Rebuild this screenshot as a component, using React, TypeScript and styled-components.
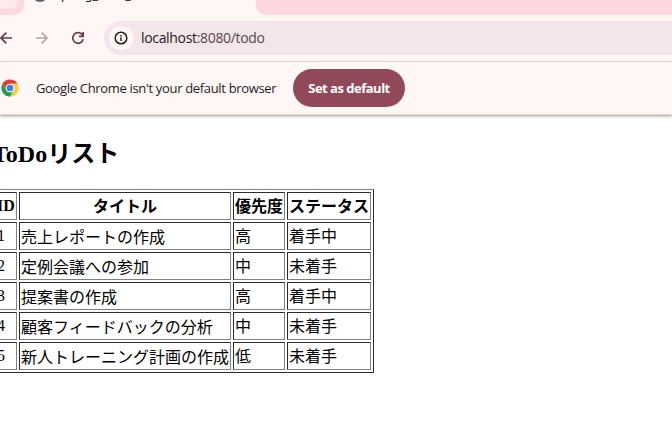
import React from "react";
import styled, { createGlobalStyle } from "styled-components";

const Global = createGlobalStyle`
  * { box-sizing: border-box; }
  html, body { margin: 0; background: #fff; }
  body { overflow: hidden; }
`;

const Window = styled.div`
  width: 672px;
  height: 447px;
  overflow: hidden;
  background: #fff;
`;

const TabStrip = styled.div`
  height: 15px;
  display: flex;
  background: #fff7f5;
  overflow: hidden;
`;

const StripLeft = styled.div`
  width: 24px;
  height: 15px;
  background: #ffd7df;
  border-bottom-right-radius: 10px;
`;

const InactiveTab = styled.div`
  width: 18px;
  height: 9px;
  background: #ffe9ec;
  border-bottom-right-radius: 8px;
`;

const ActiveTab = styled.div`
  width: 232px;
  height: 15px;
  display: flex;
  overflow: hidden;
`;

const TabIcon = styled.svg`
  flex: none;
  margin: -14px 0 0 8px;
`;

const TabTitle = styled.span`
  margin: -14px 0 0 7px;
  font: 12.5px/18px "Noto Sans", sans-serif;
  color: #241b1d;
  white-space: pre;
`;

const StripRight = styled.div`
  flex: 1;
  height: 15px;
  background: #ffd7df;
  border-bottom-left-radius: 10px;
`;

const Toolbar = styled.div`
  height: 47px;
  display: flex;
  align-items: flex-start;
  padding-top: 6px;
  background: #fff7f5;
  border-bottom: 1px solid #efdfe2;
`;

const NavIcon = styled.svg<{ $gap: number }>`
  flex: none;
  margin: 9px ${(p) => p.$gap}px 0 0;
`;

const AddressBar = styled.div`
  flex: 1;
  height: 34px;
  display: flex;
  align-items: center;
  padding-left: 5px;
  background: #f2e6ea;
  border-radius: 17px 0 0 17px;
`;

const SiteInfo = styled.div`
  width: 24px;
  height: 24px;
  display: grid;
  place-items: center;
  border-radius: 50%;
  background: #fff7f5;
`;

const Url = styled.span`
  margin-left: 8px;
  font: 14px/20px "Open Sans", sans-serif;
  letter-spacing: -0.33px;
  color: #241b1d;
  span { color: #5b474c; }
`;

const InfoBar = styled.div`
  height: 53px;
  display: flex;
  align-items: center;
  background: #fff7f5;
  border-bottom: 1px solid #e6d3d7;
  box-shadow: 0 1px 3px rgba(0, 0, 0, 0.4);
`;

const ChromeLogo = styled.svg`
  flex: none;
  margin-left: 1px;
`;

const Message = styled.span`
  width: 257px;
  padding-left: 17px;
  font: 13px/18px "Open Sans", sans-serif;
  letter-spacing: -0.33px;
  color: #241b1d;
  white-space: nowrap;
`;

const DefaultButton = styled.button`
  width: 112px;
  height: 38px;
  margin-left: 17px;
  padding: 0;
  border: 0;
  border-radius: 19px;
  background: #914859;
  color: #fff;
  font: 700 13px/18px "Open Sans", sans-serif;
  letter-spacing: -0.5px;
  white-space: nowrap;
`;

const Page = styled.main`
  margin-left: -8px;
  padding-top: 21px;
  font: 16px/24px "Liberation Serif", "Noto Sans CJK JP", serif;
  color: #000;
`;

const Title = styled.h2`
  margin: 0 0 17px;
  height: 36px;
  font-size: 24px;
  line-height: 36px;
`;

const Table = styled.table`
  width: 382px;
  table-layout: fixed;
  border-collapse: separate;
  border-spacing: 2px;
  border: 1px solid;
  border-color: #808080 #2c2c2c #2c2c2c #808080;
`;

const Col = styled.col<{ $width: number }>`
  width: ${(p) => p.$width}px;
`;

const HeadCell = styled.th`
  height: 28px;
  padding: 2px 1px 0;
  border: 1px solid;
  border-color: #2c2c2c #808080 #808080 #2c2c2c;
  white-space: nowrap;
  line-height: 24px;
  &:first-child { padding: 1px; }
`;

const Cell = styled.td`
  height: 28px;
  padding: 2px 1px 0;
  border: 1px solid;
  border-color: #2c2c2c #808080 #808080 #2c2c2c;
  white-space: nowrap;
  line-height: 24px;
  &:first-child { padding: 1px; }
  &:nth-child(2) { padding: 4px 1px 0; line-height: 22px; }
`;

const headers = ["ID", "タイトル", "優先度", "ステータス"];
const widths = [22, 212, 52, 84];
const todos = [
  ["1", "売上レポートの作成", "高", "着手中"],
  ["2", "定例会議への参加", "中", "未着手"],
  ["3", "提案書の作成", "高", "着手中"],
  ["4", "顧客フィードバックの分析", "中", "未着手"],
  ["5", "新人トレーニング計画の作成", "低", "未着手"],
];

export default function App() {
  return (
    <Window>
      <Global />
      <TabStrip>
        <StripLeft><InactiveTab /></StripLeft>
        <ActiveTab>
          <TabIcon width="16" height="16"><circle cx="8" cy="8" r="8" fill="#5f6368" /></TabIcon>
          <TabTitle>spring_todo_</TabTitle>
        </ActiveTab>
        <StripRight />
      </TabStrip>
      <Toolbar>
        <NavIcon $gap={24} width="12" height="16" viewBox="0 0 12 16" fill="none" stroke="#5d3f46" strokeWidth="1.7">
          <path d="M12 8H1M6.3 2.7L1 8l5.3 5.3" />
        </NavIcon>
        <NavIcon $gap={22} width="12" height="16" viewBox="0 0 12 16" fill="none" stroke="#b5a5a8" strokeWidth="1.7">
          <path d="M0 8h11M5.7 2.7L11 8l-5.3 5.3" />
        </NavIcon>
        <NavIcon $gap={18} width="16" height="16" viewBox="0 0 16 16" fill="none" stroke="#5d3f46" strokeWidth="1.7">
          <path d="M13.2 9.3A5.3 5.3 0 1 1 11.8 4.2L13 5.5M13.2 2v4.3H9" />
        </NavIcon>
        <AddressBar>
          <SiteInfo>
            <svg width="14" height="14" viewBox="0 0 14 14">
              <circle cx="7" cy="7" r="5.8" fill="none" stroke="#241b1d" strokeWidth="1.5" />
              <path d="M6.3 6.3h1.4V10H6.3zM6.3 4h1.4v1.4H6.3z" fill="#241b1d" />
            </svg>
          </SiteInfo>
          <Url>localhost<span>:8080/todo</span></Url>
        </AddressBar>
      </Toolbar>
      <InfoBar>
        <ChromeLogo width="18" height="18" viewBox="0 0 48 48">
          <path d="M4.1 12.5A23 23 0 0 1 43.9 12.5H24A11.5 11.5 0 0 0 14 29.8z" fill="#e33b2e" />
          <path d="M4.1 12.5A23 23 0 0 0 24 47L34 29.8A11.5 11.5 0 0 1 14 29.8z" fill="#229a4f" />
          <path d="M43.9 12.5A23 23 0 0 1 24 47L34 29.8A11.5 11.5 0 0 0 24 12.5z" fill="#fccb35" />
          <circle cx="24" cy="24" r="11" fill="#fff" />
          <circle cx="24" cy="24" r="8.8" fill="#3b7ded" />
        </ChromeLogo>
        <Message>Google Chrome isn't your default browser</Message>
        <DefaultButton>Set as default</DefaultButton>
      </InfoBar>
      <Page>
        <Title>ToDoリスト</Title>
        <Table>
          <colgroup>{widths.map((w) => <Col key={w} $width={w} />)}</colgroup>
          <thead><tr>{headers.map((h) => <HeadCell key={h}>{h}</HeadCell>)}</tr></thead>
          <tbody>
            {todos.map((row) => (
              <tr key={row[0]}>{row.map((value, i) => <Cell key={i}>{value}</Cell>)}</tr>
            ))}
          </tbody>
        </Table>
      </Page>
    </Window>
  );
}
